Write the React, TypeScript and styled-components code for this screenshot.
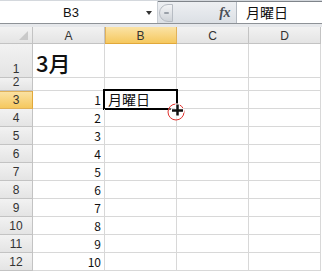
import { createGlobalStyle, styled } from "styled-components";

const GlobalStyle = createGlobalStyle`
  html, body {
    margin: 0;
    padding: 0;
    background: #ffffff;
    overflow: hidden;
  }
  * {
    box-sizing: border-box;
  }
`;

const COLS = ["A", "B", "C", "D"];
const ROWS = [1, 2, 3, 4, 5, 6, 7, 8, 9, 10, 11, 12];

const cellValue = (row: number, col: string) => {
  if (col === "A" && row === 1) return "3月";
  if (col === "A" && row >= 3) return String(row - 2);
  if (col === "B" && row === 3) return "月曜日";
  return "";
};

const App = () => {
  return (
    <>
      <GlobalStyle />
      <Window>
        <FormulaBar>
          <NameBox>
            <NameText>B3</NameText>
            <DropArrow />
          </NameBox>
          <Middle>
            <Splitter>
              <SplitterDash />
            </Splitter>
            <Fx>fx</Fx>
          </Middle>
          <FormulaInput>月曜日</FormulaInput>
        </FormulaBar>
        <Gap />
        <Sheet>
          <Corner>
            <CornerTriangle />
          </Corner>
          {COLS.map((c) => (
            <ColHeader key={c} $active={c === "B"}>
              {c}
            </ColHeader>
          ))}
          {ROWS.map((r) => (
            <Row key={r} r={r} />
          ))}
        </Sheet>
      </Window>
    </>
  );
};

const Row = ({ r }: { r: number }) => {
  return (
    <>
      <RowHeader $active={r === 3}>{r}</RowHeader>
      {COLS.map((c) => {
        const value = cellValue(r, c);
        const isNumber = /^\d+$/.test(value);
        const selected = r === 3 && c === "B";
        return (
          <Cell key={c} $right={isNumber}>
            {r === 1 && c === "A" ? <BigText>{value}</BigText> : value}
            {selected && (
              <>
                <SelectionBox />
                <Cursor viewBox="0 0 20 20" width="20" height="20">
                  <circle cx="9" cy="10" r="8" fill="rgba(255,255,255,0.4)" stroke="#e0322e" strokeWidth="1" />
                  <path d="M10.5 1.5v13M4 8.5h13" stroke="#ffffff" strokeWidth="4.5" />
                  <path d="M10.5 2.5v11M5 8.5h11" stroke="#111111" strokeWidth="2.5" />
                </Cursor>
              </>
            )}
          </Cell>
        );
      })}
    </>
  );
};

export default App;

const Window = styled.div`
  width: 322px;
  height: 274px;
  background: #ffffff;
  overflow: hidden;
`;

const FormulaBar = styled.div`
  display: flex;
  height: 24px;
  background: #dfe3e8;
  border-top: 1px solid #d4d8dd;
  border-bottom: 1px solid #8e9297;
  position: relative;

  &::before {
    content: "";
    position: absolute;
    left: 0;
    right: 0;
    top: 0;
    height: 1px;
    background: #7f848a;
  }
`;

const NameBox = styled.div`
  width: 158px;
  height: 100%;
  background: #ffffff;
  display: flex;
  align-items: center;
  position: relative;
  border-right: 1px solid #c9ced4;
`;

const NameText = styled.div`
  flex: 1;
  text-align: center;
  font-family: "Liberation Sans", Arial, sans-serif;
  font-size: 13px;
  color: #111;
  padding-right: 4px;
  padding-top: 1px;
`;

const DropArrow = styled.div`
  width: 0;
  height: 0;
  margin-right: 5px;
  margin-top: 2px;
  border-left: 3.5px solid transparent;
  border-right: 3.5px solid transparent;
  border-top: 4px solid #333;
`;

const Middle = styled.div`
  width: 78px;
  height: 100%;
  display: flex;
  align-items: center;
  justify-content: space-between;
  padding: 2px 6px 1px 1px;
  background: linear-gradient(#eef0f3, #dce0e5);
`;

const Splitter = styled.div`
  width: 14px;
  height: 18px;
  border-radius: 9px 0 0 9px;
  background: linear-gradient(#f3f4f6, #cfd3d8);
  border: 1px solid #b7bcc3;
  display: flex;
  align-items: center;
  justify-content: center;
`;

const SplitterDash = styled.div`
  width: 5px;
  height: 2px;
  background: #9aa0a8;
  border-radius: 1px;
`;

const Fx = styled.div`
  font-family: "Liberation Serif", "Times New Roman", serif;
  font-style: italic;
  font-weight: bold;
  font-size: 14px;
  color: #4a4f57;
  letter-spacing: -0.5px;
`;

const FormulaInput = styled.div`
  flex: 1;
  height: 100%;
  background: #ffffff;
  border-left: 1px solid #b4bac2;
  padding-left: 9px;
  display: flex;
  align-items: center;
  font-family: "Noto Sans CJK JP", sans-serif;
  font-size: 14px;
  color: #111;
`;

const Gap = styled.div`
  height: 3px;
  background: #e6e8eb;
`;

const Sheet = styled.div`
  display: grid;
  grid-template-columns: 33px repeat(4, 72px);
  grid-template-rows: 17px 34px 13px repeat(10, 18px);
`;

const headerBase = `
  background: linear-gradient(#f2f2f2, #e4e4e4);
  border-right: 1px solid #c3c3c3;
  border-bottom: 1px solid #c3c3c3;
  font-family: "Liberation Sans", Arial, sans-serif;
  font-size: 12px;
  color: #333;
  display: flex;
  justify-content: center;
`;

const Corner = styled.div`
  ${headerBase}
  position: relative;
`;

const CornerTriangle = styled.div`
  position: absolute;
  right: 4px;
  bottom: 3px;
  width: 0;
  height: 0;
  border-left: 9px solid transparent;
  border-bottom: 9px solid #c9c9c9;
`;

const ColHeader = styled.div<{ $active: boolean }>`
  ${headerBase}
  align-items: flex-end;
  padding-bottom: 0;
  line-height: 14px;
  ${({ $active }) =>
    $active &&
    `
    background: linear-gradient(#fbe3a6, #f5c85e);
    border-bottom-color: #e1a83a;
    border-right-color: #e1b25a;
    box-shadow: inset 1px 0 0 #e1b25a;
  `}
`;

const RowHeader = styled.div<{ $active: boolean }>`
  ${headerBase}
  align-items: flex-end;
  line-height: 16px;
  ${({ $active }) =>
    $active &&
    `
    background: linear-gradient(#fbe3a6, #f5c85e);
    border-right-color: #e1a83a;
    border-bottom-color: #e1b25a;
    box-shadow: inset 0 1px 0 #e1b25a;
  `}
`;

const Cell = styled.div<{ $right: boolean }>`
  position: relative;
  border-right: 1px solid #d8d8d8;
  border-bottom: 1px solid #d8d8d8;
  display: flex;
  align-items: flex-end;
  justify-content: ${({ $right }) => ($right ? "flex-end" : "flex-start")};
  padding: 0 3px 0 3px;
  font-family: "Noto Sans CJK JP", sans-serif;
  font-size: ${({ $right }) => ($right ? "12px" : "14px")};
  line-height: 17px;
  color: #111;
  white-space: nowrap;
`;

const BigText = styled.span`
  font-size: 22px;
  line-height: 30px;
  font-weight: 500;
`;

const SelectionBox = styled.div`
  position: absolute;
  left: -2px;
  top: -2px;
  width: 75px;
  height: 21px;
  border: 2px solid #000;
  pointer-events: none;
`;

const Cursor = styled.svg`
  position: absolute;
  left: 62px;
  top: 11px;
  z-index: 2;
  overflow: visible;
`;
